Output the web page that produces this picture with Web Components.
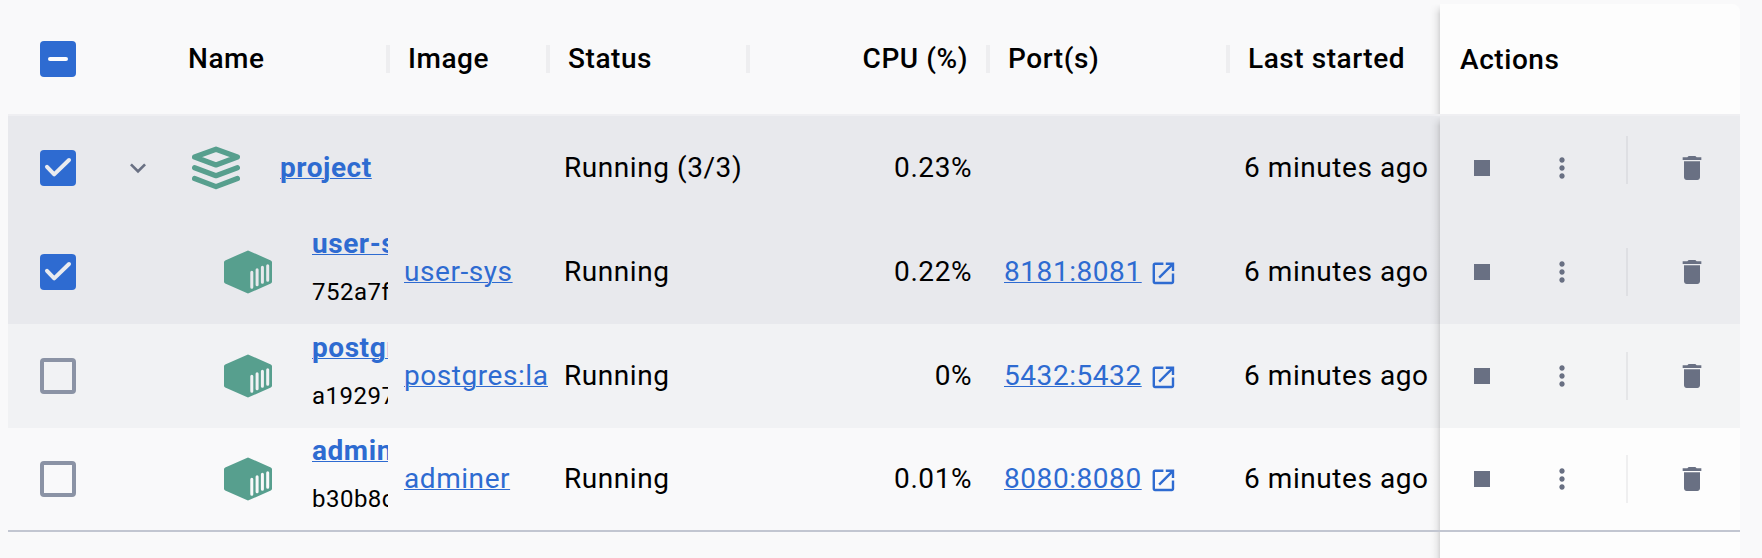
<!DOCTYPE html>
<html lang="en">
<head>
<meta charset="utf-8">
<title>Containers</title>
<style>
body { margin: 0; background: #f9f9fa; font-family: Roboto, "Liberation Sans", sans-serif; }
</style>
</head>
<body>
<container-table></container-table>
<script>
const define = (name, html) => {
  const t = document.createElement('template');
  t.innerHTML = html;
  customElements.define(name, class extends HTMLElement {
    constructor() {
      super();
      this.attachShadow({ mode: 'open' }).append(t.content.cloneNode(true));
    }
  });
};

const icons = {
  stop: ['0 0 24 24', '<path d="M6 6h12v12H6z"/>'],
  more: ['0 0 24 24', '<path d="M12 8c1.1 0 2-.9 2-2s-.9-2-2-2-2 .9-2 2 .9 2 2 2zm0 2c-1.1 0-2 .9-2 2s.9 2 2 2 2-.9 2-2-.9-2-2-2zm0 6c-1.1 0-2 .9-2 2s.9 2 2 2 2-.9 2-2-.9-2-2-2z"/>'],
  trash: ['0 0 24 24', '<path d="M6 19c0 1.1.9 2 2 2h8c1.1 0 2-.9 2-2V7H6v12zM19 4h-3.5l-1-1h-5l-1 1H5v2h14V4z"/>'],
  chevron: ['0 0 24 24', '<path d="M16.59 8.59 12 13.17 7.41 8.59 6 10l6 6 6-6z"/>'],
  open: ['0 0 24 24', '<path d="M19 19H5V5h7V3H5c-1.11 0-2 .9-2 2v14c0 1.1.89 2 2 2h14c1.1 0 2-.9 2-2v-7h-2v7zM14 3v2h3.59l-9.83 9.83 1.41 1.41L19 6.41V10h2V3h-7z"/>'],
  stack: ['0 0 48 48', '<g fill="none" stroke="currentColor" stroke-width="5.200" stroke-linejoin="round" stroke-linecap="round"><path d="M24 5.200 45.400 13 24 21 2.600 13z"/><path d="M2.600 23.700 24 31.700 45.400 23.700"/><path d="M2.600 34.500 24 42.600 45.400 34.500"/></g>'],
  box: ['0 0 48 48', '<path d="M22.800 2.900q1.200-.6 2.400 0L46.800 12.400q1.200.6 1.200 1.800v19.600q0 1.200-1.200 1.800L25.200 45.100q-1.200.6-2.400 0L1.200 35.600Q0 35 0 33.800V14.200q0-1.200 1.200-1.800z"/><g stroke="var(--row-bg)" stroke-width="3" stroke-linecap="round"><path d="M27.800 24.300v15M33.100 21.700v15M38.400 19.300v15M43.700 17.700v14.500"/></g>']
};
customElements.define('ui-icon', class extends HTMLElement {
  connectedCallback() {
    const [box, art] = icons[this.getAttribute('name')];
    const s = this.getAttribute('size') || 32;
    this.attachShadow({ mode: 'open' }).innerHTML =
      `<style>:host{display:block;flex:none;width:${s}px;height:${s}px}svg{display:block}</style><svg width="${s}" height="${s}" viewBox="${box}" fill="currentColor">${art}</svg>`;
  }
});

define('check-box', `<style>
:host { display: block; width: 36px; height: 36px; box-sizing: border-box; border-radius: 4px; border: 4px solid #8b93a5; }
:host([state]) { border: 0; background: #2e6bd1; }
svg { display: none; fill: none; stroke-width: 4; stroke-linecap: round; stroke-linejoin: round; }
:host([state=on]) .on, :host([state=mixed]) .mixed { display: block; }
</style>
<svg class="on" width="36" height="36" stroke="#e9ebef"><path d="M7 16.800 14.200 24.400 29 10"/></svg>
<svg class="mixed" width="36" height="36" stroke="#fcfcfd"><path d="M10 18H26"/></svg>`);

define('text-link', `<style>
:host { display: inline; color: #2e6bd1; text-decoration: underline; text-decoration-thickness: 1px; text-underline-offset: 1px; }
</style><slot></slot>`);

define('row-actions', `<style>
:host { display: flex; align-items: center; gap: 48px; color: #697083; }
i { width: 2px; height: 48px; margin-bottom: var(--divider-lift, 0px); background: rgba(60,60,70,.07); }
</style><ui-icon name="stop"></ui-icon><ui-icon name="more"></ui-icon><i></i><ui-icon name="trash"></ui-icon>`);

const shadow = `content: ""; position: absolute; right: 100%; top: 0; bottom: 0; width: 10px; background: linear-gradient(to left, rgba(0,0,0,.14), rgba(0,0,0,.06) 30%, rgba(0,0,0,.02) 65%, transparent);`;

const grid = `
:host { display: grid; grid-template-columns: 100px 60px 220px 160px 200px 240px 240px 212px 300px; width: 1732px; background: var(--row-bg); letter-spacing: .56px; font-size: 28px; line-height: 40px; color: #000; white-space: nowrap; }
.c { min-width: 0; display: flex; align-items: center; box-sizing: border-box; }
.check, .toggle { justify-content: center; }
.right { justify-content: flex-end; }
.actions { position: relative; background: rgba(255,255,255,.15); }
.actions::before { ${shadow} }
`;

define('table-head', `<style>${grid}
:host { --row-bg: #f9f9fa; height: 112px; box-sizing: border-box; border-bottom: 2px solid #efeff2; font-weight: 500; }
.h { padding: 0 20px; position: relative; }
.sep::after { content: ""; position: absolute; z-index: 1; right: -2px; top: 41px; width: 4px; height: 28px; background: #eeeef0; }
.actions { background: #fdfdfd; border-top-right-radius: 8px; padding: 2px 20px 0; }
.actions::before { mask-image: linear-gradient(transparent, #000 10px); }
</style>
<div class="c check"><check-box state="mixed"></check-box></div>
<div class="c toggle"></div>
<div class="c h sep">Name</div>
<div class="c h sep">Image</div>
<div class="c h sep">Status</div>
<div class="c h sep right">CPU (%)</div>
<div class="c h sep">Port(s)</div>
<div class="c h">Last started</div>
<div class="c actions">Actions</div>`);

define('table-row', `<style>${grid}
:host { --row-bg: #f9f9fa; height: 104px; }
:host([tone=selected]) { --row-bg: #e8e9ed; }
:host([tone=hover]) { --row-bg: #f1f2f4; }
:host([last]) { height: 104px; box-sizing: border-box; border-bottom: 2px solid #c2c6d1; }
.cell { padding: 0 16px; }
.name { padding: 0 0 0 24px; gap: 40px; overflow: hidden; color: #579f8e; }
:host([child]) .name { padding-left: 56px; }
.name div { color: #000; display: flex; flex-direction: column; }
.title { font-weight: 700; }
.id { font-size: 24px; letter-spacing: .48px; line-height: 32px; }
:host([child]) .title { height: 52px; }
:host([child]) .name div { padding-bottom: 13px; }
.image { padding: 0 0 0 16px; overflow: hidden; }
.port { gap: 7px; color: #2e6bd1; }
.actions { padding-left: 26px; }
:host([first]) { --divider-lift: 16px; }
:host([first]) .actions::before { mask-image: linear-gradient(transparent, #000 10px); }
:host([last]) .actions { background: #fdfdfd; }
</style>
<div class="c check"><slot name="check"></slot></div>
<div class="c toggle"><slot name="toggle"></slot></div>
<div class="c name"><slot name="icon"></slot><div><span class="title"><slot name="title"></slot></span><span class="id"><slot name="id"></slot></span></div></div>
<div class="c image"><slot name="image"></slot></div>
<div class="c cell"><slot name="status"></slot></div>
<div class="c cell right"><slot name="cpu"></slot></div>
<div class="c cell port"><slot name="port"></slot></div>
<div class="c cell"><slot name="started"></slot></div>
<div class="c actions"><row-actions></row-actions></div>`);

const child = (attrs, check, name, id, image, cpu, port) => `
<table-row child ${attrs}>
<check-box slot="check" ${check}></check-box>
<ui-icon slot="icon" name="box" size="48"></ui-icon>
<text-link slot="title">${name}</text-link><span slot="id">${id}</span>
<text-link slot="image">${image}</text-link>
<span slot="status">Running</span><span slot="cpu">${cpu}</span>
<text-link slot="port">${port}</text-link><ui-icon class="open" slot="port" name="open" size="28.8"></ui-icon>
<span slot="started">6 minutes ago</span>
</table-row>`;

define('container-table', `<style>
:host { display: block; padding: 4px 0 0 8px; height: 558px; box-sizing: border-box; overflow: hidden; }
.open { margin-top: 3px; }
.tail { display: grid; grid-template-columns: 1432px 300px; height: 26px; }
.tail div { grid-column: 2; position: relative; background: #fdfdfd; }
.tail div::before { ${shadow} }
</style>
<table-head></table-head>
<table-row first tone="selected">
<check-box slot="check" state="on"></check-box>
<ui-icon slot="toggle" name="chevron" style="color:#697083"></ui-icon>
<ui-icon slot="icon" name="stack" size="48"></ui-icon>
<text-link slot="title">project</text-link>
<span slot="status">Running (3/3)</span><span slot="cpu">0.23%</span><span slot="started">6 minutes ago</span>
</table-row>
${child('tone="selected"', 'state="on"', 'user-s', '752a7f', 'user-sys', '0.22%', '8181:8081')}
${child('tone="hover"', '', 'postgr', 'a19297', 'postgres:la', '0%', '5432:5432')}
${child('last', '', 'admin', 'b30b8c', 'adminer', '0.01%', '8080:8080')}
<div class="tail"><div></div></div>`);
</script>
</body>
</html>
